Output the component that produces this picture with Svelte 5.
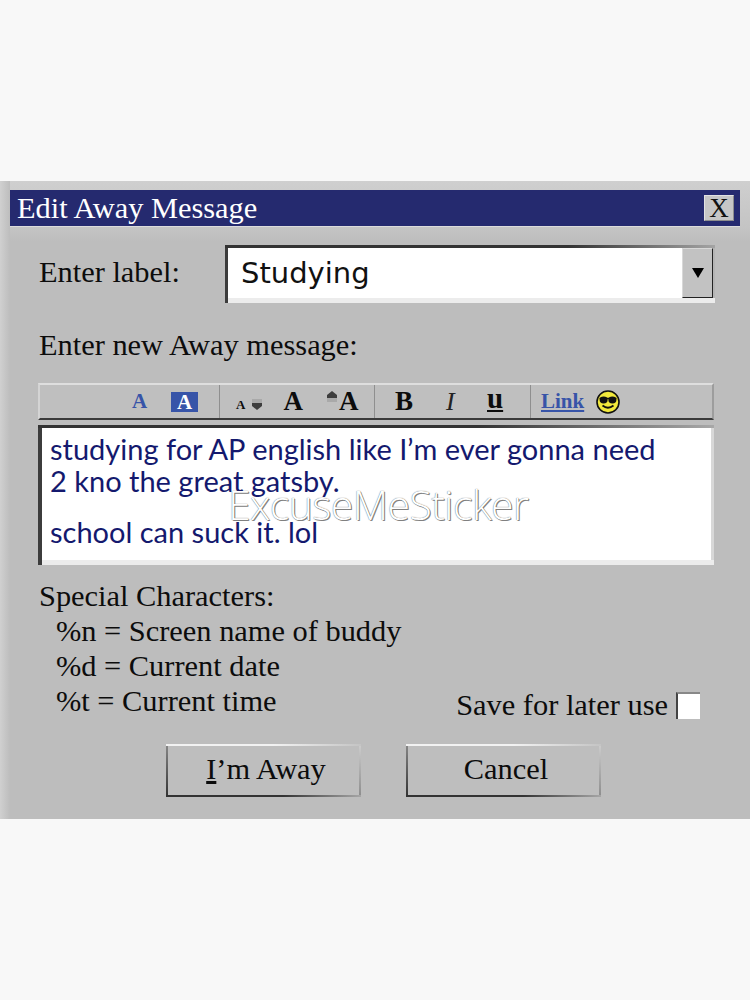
<script>
  let label = "Studying";
  const specials = ["%n = Screen name of buddy", "%d = Current date", "%t = Current time"];
</script>

<div class="page">
  <div class="dialog">
    <div class="titlebar">
      <span class="title">Edit Away Message</span>
      <button class="close">X</button>
    </div>

    <div class="content">
      <div class="label-row">
        <span class="label">Enter label:</span>
        <div class="select">
          <span class="value">{label}</span>
          <div class="drop"><i class="tri"></i></div>
        </div>
      </div>

      <p class="heading">Enter new Away message:</p>

      <div class="toolbar">
        <div class="group g1">
          <span class="a-blue">A</span>
          <span class="a-box">A</span>
        </div>
        <div class="group g2">
          <span class="a-small">A</span>
          <svg class="arrow down" viewBox="0 0 10 14" width="10" height="14">
            <path d="M0 7V3h10v4z" fill="#a9a9a9" />
            <path d="M0 7h10v3l-5 4-5-4z" fill="#3d3d3d" />
          </svg>
          <span class="a-big">A</span>
          <svg class="arrow up" viewBox="0 0 10 14" width="10" height="14">
            <path d="M0 7V4l5-4 5 4v3z" fill="#3d3d3d" />
            <path d="M0 7h10v4H0z" fill="#a9a9a9" />
          </svg>
          <span class="a-big tight">A</span>
        </div>
        <div class="group g3">
          <b>B</b>
          <i class="ital">I</i>
          <u>u</u>
        </div>
        <div class="group g4">
          <span class="link">Link</span>
          <svg class="smile" viewBox="0 0 24 24" width="24" height="24">
            <circle cx="12" cy="12" r="11" fill="#f2e93c" stroke="#111" stroke-width="1.6" />
            <path d="M3.500 8.500h17" stroke="#111" stroke-width="1.6" />
            <ellipse cx="7.600" cy="10" rx="4" ry="3.400" fill="#111" />
            <ellipse cx="16.400" cy="10" rx="4" ry="3.400" fill="#111" />
            <path d="M6.500 15.500q5.500 4.500 11 0" fill="none" stroke="#111" stroke-width="1.8" />
          </svg>
        </div>
      </div>

      <div class="editor">
        <p>studying for AP english like I’m ever gonna need<br />2 kno the great gatsby.</p>
        <p class="last">school can suck it. lol</p>
        <span class="mark">ExcuseMeSticker</span>
      </div>

      <div class="lower">
        <div class="specials">
          <div>Special Characters:</div>
          {#each specials as s}
            <div class="indent">{s}</div>
          {/each}
        </div>
        <label class="save">Save for later use <span class="check"></span></label>
      </div>

      <div class="buttons">
        <button class="btn"><u>I</u>’m Away</button>
        <button class="btn">Cancel</button>
      </div>
    </div>
  </div>
</div>

<style>
  :global(body) {
    margin: 0;
    background: #f8f8f8;
  }
  .page {
    height: 1000px;
    padding-top: 181px;
    box-sizing: border-box;
    font-family: "Liberation Serif", serif;
    color: #0c0c0c;
  }
  .dialog {
    height: 638px;
    box-sizing: border-box;
    padding: 9px 10px 0;
    background:
      linear-gradient(90deg, #d0d0d0, #bdbdbd 10px) left / 10px 100% no-repeat,
      linear-gradient(#cfcfcf, #c4c4c4 46px, #bdbdbd 60px);
  }
  .titlebar {
    height: 37px;
    background: #252a6f;
    display: flex;
    align-items: center;
    justify-content: space-between;
    padding: 0 6px 0 7px;
    border-bottom: 1px solid #dcdcdc;
    box-sizing: border-box;
  }
  .title {
    color: #fff;
    font-size: 30.4px;
  }
  .close {
    width: 30px;
    height: 26px;
    padding: 0;
    border: 1px solid #e2e2e2;
    border-right-color: #8d8d8d;
    border-bottom-color: #8d8d8d;
    background: #c6c6c6;
    font: 27px/24px "Liberation Serif", serif;
    color: #111;
  }
  .content {
    padding: 18px 26px 0 28px;
  }
  .label-row {
    display: flex;
    align-items: center;
    height: 58px;
  }
  .label {
    width: 186px;
    margin: 0 0 3px 1px;
    font-size: 30.4px;
  }
  .select {
    flex: 1;
    height: 58px;
    margin-right: -1px;
    box-sizing: border-box;
    padding: 3px 2px 0 3px;
    background:
      linear-gradient(90deg, #333, #333 70%, #a4a4a4) top / 100% 3px no-repeat,
      linear-gradient(#3c3c3c, #3c3c3c) left / 3px 100% no-repeat,
      linear-gradient(#ececec, #ececec) bottom / 100% 5px no-repeat,
      linear-gradient(#b4b4b4, #b4b4b4) right / 2px 100% no-repeat,
      #fff;
    display: flex;
    justify-content: space-between;
  }
  .value {
    font-family: "DejaVu Sans", sans-serif;
    font-size: 29px;
    line-height: 50px;
    margin-left: 13px;
    color: #111;
  }
  .drop {
    width: 31px;
    height: 50px;
    box-sizing: border-box;
    background: #c2c2c2;
    border-left: 1px solid #d8d8d8;
    border-top: 1px solid #d8d8d8;
    border-right: 1px solid #222;
    border-bottom: 1px solid #222;
    display: flex;
    align-items: center;
    justify-content: center;
  }
  .tri {
    width: 0;
    height: 0;
    border-left: 6px solid transparent;
    border-right: 6px solid transparent;
    border-top: 10px solid #000;
  }
  .heading {
    margin: 25px 0 0 1px;
    font-size: 30.4px;
    line-height: 34px;
  }
  .toolbar {
    margin-top: 21px;
    height: 37px;
    box-sizing: border-box;
    border: 2px solid #9d9d9d;
    border-top-color: #dedede;
    border-left-color: #d4d4d4;
    border-bottom-color: #3a3a3a;
    background: #bfbfbf;
    display: flex;
    align-items: center;
  }
  .group {
    height: 100%;
    display: flex;
    align-items: center;
    box-sizing: border-box;
    border-right: 1px solid #8f8f8f;
    font-weight: bold;
  }
  .g1 {
    width: 180px;
    padding-left: 92px;
    gap: 24px;
  }
  .a-blue {
    color: #3754a8;
    font-size: 21px;
  }
  .a-box {
    width: 27px;
    height: 20px;
    background: #3754a8;
    color: #fff;
    font-size: 21px;
    line-height: 20px;
    text-align: center;
  }
  .g2 {
    width: 155px;
    padding-left: 16px;
  }
  .a-small {
    font-size: 13px;
    margin-top: 7px;
    margin-right: 7px;
  }
  .a-big {
    font-size: 27px;
    margin-left: 21px;
  }
  .a-big.tight {
    margin-left: 2px;
  }
  .arrow.down {
    margin-top: 2px;
  }
  .arrow.up {
    margin-left: 24px;
    margin-bottom: 7px;
  }
  .g3 {
    width: 156px;
    padding-left: 20px;
    font-size: 27px;
  }
  .g3 b {
    width: 47px;
  }
  .ital {
    width: 45px;
    font-weight: normal;
    font-size: 26px;
    color: #222;
    padding-left: 4px;
    box-sizing: border-box;
  }
  .g3 u {
    font-size: 29px;
    margin-top: -6px;
    text-decoration-thickness: 2px;
    text-underline-offset: 2px;
  }
  .g4 {
    border-right: 0;
    padding-left: 10px;
    gap: 12px;
  }
  .link {
    color: #3754a8;
    font-size: 21px;
    text-decoration: underline;
  }
  .smile {
    display: block;
  }
  .editor {
    margin-top: 5px;
    height: 140px;
    box-sizing: border-box;
    padding: 8px 8px 0 12px;
    background:
      linear-gradient(90deg, #333, #333 65%, #a8a8a8) top / 100% 3px no-repeat,
      linear-gradient(#3c3c3c, #3c3c3c) left / 4px 100% no-repeat,
      linear-gradient(#ececec, #ececec) bottom / 100% 5px no-repeat,
      linear-gradient(#d8d8d8, #d8d8d8) right / 3px 100% no-repeat,
      #fff;
    position: relative;
    font-family: "Lato", sans-serif;
    font-size: 29px;
    color: #14196e;
    line-height: 32px;
  }
  .editor p {
    margin: 0;
  }
  .editor .last {
    margin-top: 19px;
  }
  .mark {
    position: absolute;
    left: 190px;
    top: 56px;
    font-family: "Open Sans", sans-serif;
    font-weight: 300;
    font-size: 41px;
    line-height: 46px;
    letter-spacing: -0.6px;
    color: #fff;
    text-shadow: 0 0 1px #444, 1px 1px 0 #888;
  }
  .lower {
    margin-top: 14px;
    margin-left: 1px;
    display: flex;
    justify-content: space-between;
    align-items: flex-end;
    font-size: 30.4px;
    line-height: 35px;
  }
  .indent {
    padding-left: 17px;
  }
  .save {
    display: flex;
    align-items: center;
    gap: 8px;
    margin-right: 14px;
    margin-bottom: -4px;
  }
  .check {
    width: 24px;
    height: 27px;
    box-sizing: border-box;
    background: #fff;
    border-left: 2px solid #444;
    border-top: 2px solid #888;
  }
  .buttons {
    margin-top: 25px;
    padding-left: 128px;
    display: flex;
    gap: 45px;
  }
  .btn {
    width: 195px;
    height: 53px;
    padding: 0 0 2px 5px;
    box-sizing: border-box;
    border: 0;
    background:
      linear-gradient(90deg, #f2f2f2, #f2f2f2 55%, #c4c4c4) top / 100% 2px no-repeat,
      linear-gradient(90deg, #333, #333 60%, #a6a6a6) bottom / 100% 2px no-repeat,
      linear-gradient(#888, #333) left / 2px 100% no-repeat,
      linear-gradient(#cdcdcd, #8c8c8c) right / 2px 100% no-repeat,
      #bebebe;
    font: 30.4px "Liberation Serif", serif;
    color: #0c0c0c;
  }
</style>
